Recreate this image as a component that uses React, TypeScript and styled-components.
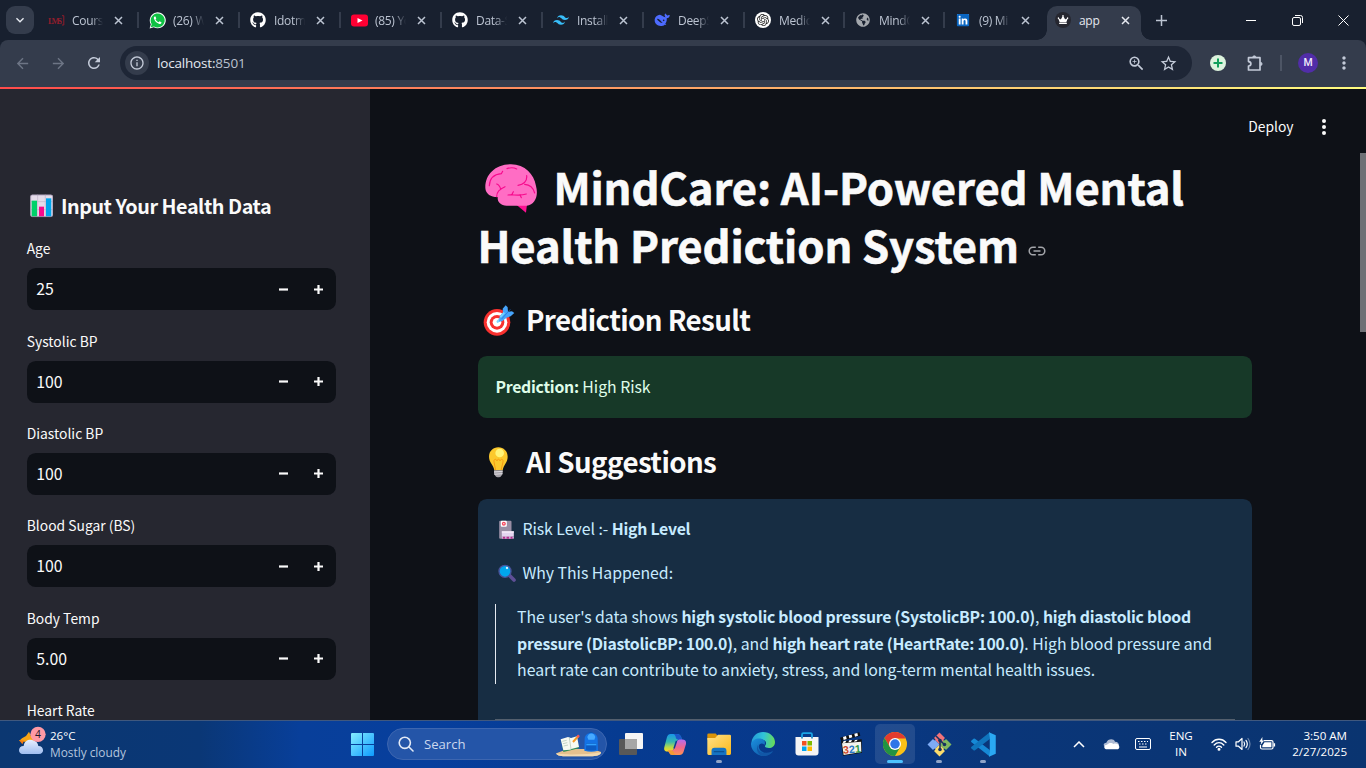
import React from 'react';
import styled, { createGlobalStyle, css } from 'styled-components';
import {
  MdArrowBack, MdArrowForward, MdRefresh, MdOutlineInfo, MdZoomIn, MdStarBorder,
  MdMoreVert, MdKeyboardArrowDown,
} from 'react-icons/md';
import { FaGithub, FaYoutube, FaGlobeAmericas, FaLinkedin, FaCrown } from 'react-icons/fa';
import { SiTailwindcss, SiOpenai } from 'react-icons/si';

const SOURCE = "'Noto Sans CJK JP', 'Noto Sans', sans-serif";
const SEGOE = "'Open Sans', 'Noto Sans', sans-serif";

const GlobalStyle = createGlobalStyle`
  *, *::before, *::after { box-sizing: border-box; }
  html, body { margin: 0; padding: 0; overflow: hidden; background: #0e1117; }
  svg { display: block; flex: none; }
`;

const Screen = styled.div`
  width: 1366px;
  height: 768px;
  display: flex;
  flex-direction: column;
  overflow: hidden;
  font-family: ${SOURCE};
  color: #fafafa;
`;

/* ---------- Browser tab strip ---------- */

const TabStrip = styled.div`
  height: 40px;
  flex: none;
  display: flex;
  background: #18202f;
  font-family: ${SEGOE};
`;

const TabSearch = styled.div`
  width: 28px;
  height: 28px;
  margin: 6px 4px 0 6px;
  border-radius: 9px;
  background: #343c4c;
  color: #e8ebf2;
  display: flex;
  align-items: center;
  justify-content: center;
`;

const Tab = styled.div<{ $w: number }>`
  width: ${p => p.$w}px;
  height: 40px;
  flex: none;
  display: flex;
  align-items: center;
  padding-left: 10px;
  position: relative;
  color: #bcc4d2;
`;

const TabDivider = styled.i`
  width: 2px;
  height: 16px;
  background: #343c4c;
  position: absolute;
  right: 0;
  top: 12px;
`;

const Favicon = styled.span`
  width: 16px;
  height: 16px;
  flex: none;
  display: flex;
  align-items: center;
  justify-content: center;
`;

const TabTitle = styled.span<{ $fade?: boolean }>`
  width: 32px;
  margin: 2px 0 0 8px;
  font-size: 12px;
  line-height: 18px;
  letter-spacing: -0.3px;
  white-space: nowrap;
  overflow: hidden;
  ${p => p.$fade && css`
    -webkit-mask-image: linear-gradient(90deg, #000 60%, transparent 97%);
    mask-image: linear-gradient(90deg, #000 60%, transparent 97%);
  `}
`;

const TabClose = styled.span`
  margin-left: 10px;
  display: flex;
`;

const ActiveTab = styled.div`
  width: 94px;
  height: 34px;
  margin: 6px 0 0 2px;
  flex: none;
  display: flex;
  align-items: center;
  padding: 0 0 6px 8px;
  border-radius: 10px 10px 0 0;
  background: #343c4c;
  color: #e6e9f0;
  position: relative;
  &::before, &::after {
    content: '';
    position: absolute;
    bottom: 0;
    width: 10px;
    height: 10px;
  }
  &::before {
    left: -10px;
    background: radial-gradient(circle at 0 0, transparent 9.5px, #343c4c 10px);
  }
  &::after {
    right: -10px;
    background: radial-gradient(circle at 100% 0, transparent 9.5px, #343c4c 10px);
  }
`;

const NewTab = styled.span`
  width: 40px;
  height: 40px;
  color: #bcc4d2;
  display: flex;
  align-items: center;
  justify-content: center;
`;

const WindowButtons = styled.div`
  margin-left: auto;
  display: flex;
`;

const WindowButton = styled.span`
  width: 46px;
  height: 40px;
  display: flex;
  align-items: center;
  justify-content: center;
`;

/* ---------- Browser toolbar ---------- */

const ToolbarBack = styled.div`
  flex: none;
  background: #18202f;
`;

const Toolbar = styled.div`
  height: 47px;
  display: flex;
  align-items: center;
  padding: 0 0 1px 4px;
  background: #343c4c;
  border-radius: 8px 8px 0 0;
  overflow: hidden;
  font-family: ${SEGOE};
  color: #c3cad8;
`;

const ToolButton = styled.span<{ $w?: number; $dim?: boolean }>`
  width: ${p => p.$w ?? 36}px;
  height: 36px;
  flex: none;
  display: flex;
  align-items: center;
  justify-content: center;
  color: ${p => (p.$dim ? '#6d7585' : 'inherit')};
`;

const Omnibox = styled.div`
  width: 1072px;
  height: 34px;
  margin-left: 8px;
  flex: none;
  border-radius: 17px;
  background: #1e2636;
  display: flex;
  align-items: center;
  padding: 0 8px 0 5px;
`;

const SiteInfo = styled.span`
  width: 24px;
  height: 24px;
  border-radius: 50%;
  background: #343c4c;
  display: flex;
  align-items: center;
  justify-content: center;
`;

const Address = styled.span`
  flex: 1;
  margin-left: 8px;
  font-size: 13.5px;
  line-height: 20px;
  letter-spacing: -0.18px;
  color: #e5e9f1;
  span { color: #bac1cf; }
`;

const ToolDivider = styled.i`
  width: 2px;
  height: 16px;
  flex: none;
  margin: 0 16px 0 14px;
  background: #4d5565;
`;

const Avatar = styled.span`
  width: 20px;
  height: 20px;
  flex: none;
  border-radius: 50%;
  background: #512da8;
  color: #f0ebfa;
  font-family: Roboto, sans-serif;
  font-size: 10.5px;
  font-weight: 500;
  line-height: 20px;
  text-align: center;
`;

const Decoration = styled.div`
  height: 2px;
  flex: none;
  background: linear-gradient(90deg, #ff4b4b, #fffd80);
`;

/* ---------- App page ---------- */

const Page = styled.div`
  height: 631px;
  flex: none;
  display: flex;
  overflow: hidden;
  background: #0e1117;
`;

const Sidebar = styled.aside`
  width: 370px;
  flex: none;
  padding: 103px 34px 0 26.7px;
  background: #262730;
`;

const SidebarTitle = styled.h2`
  margin: 0;
  height: 27.5px;
  padding-left: 3.3px;
  display: flex;
  align-items: flex-start;
  gap: 7.6px;
  font-size: 19.8px;
  line-height: 27px;
  font-weight: 600;
  letter-spacing: -0.46px;
  white-space: nowrap;
  svg { margin-top: 2.4px; }
`;

const Field = styled.div`
  height: 92.4px;
  padding-top: 16.8px;
`;

const FieldLabel = styled.label`
  display: block;
  height: 31.9px;
  font-size: 13.86px;
  line-height: 24px;
`;

const NumberInput = styled.div`
  height: 42px;
  border-radius: 8.8px;
  background: #0e1117;
  display: flex;
  align-items: center;
  padding-left: 9.6px;
`;

const NumberValue = styled.span`
  flex: 1;
  font-size: 15.84px;
  line-height: 24px;
`;

const Step = styled.span`
  width: 35.2px;
  display: flex;
  justify-content: center;
`;

const Main = styled.main`
  width: 996px;
  flex: none;
  display: flex;
  flex-direction: column;
`;

const AppHeader = styled.header`
  height: 64px;
  flex: none;
  display: flex;
  align-items: center;
  justify-content: flex-end;
  gap: 24.5px;
  padding: 11px 27px 0 0;
  font-size: 13.86px;
  line-height: 24px;
`;

const DeployLabel = styled.span`
  padding-bottom: 1px;
`;

const ScrollArea = styled.div`
  flex: 1;
  display: flex;
  justify-content: space-between;
  overflow: hidden;
`;

const Content = styled.div`
  width: 774px;
  margin-left: 108px;
  flex: none;
`;

const ScrollTrack = styled.div`
  width: 6px;
  display: flex;
`;

const ScrollThumb = styled.div`
  width: 6px;
  height: 179px;
  background: #6e7075;
`;

const Title = styled.h1`
  margin: 4px 0 0;
  font-size: 43.6px;
  font-weight: 700;
  line-height: 58px;
  -webkit-text-stroke: 0.6px #fafafa;
`;

const TitleLine = styled.span<{ $track: number; $pull?: number }>`
  height: 58px;
  margin-left: ${p => p.$pull ?? 0}px;
  display: flex;
  align-items: center;
  white-space: nowrap;
  letter-spacing: ${p => p.$track}px;
  svg.brain { margin: 4px 16.7px 0 6.7px; }
  svg.link { margin: 13px 0 0 9.5px; }
`;

const Heading = styled.h2<{ $mt: number; $mb: number }>`
  height: 40px;
  margin: ${p => p.$mt}px 0 ${p => p.$mb}px;
  display: flex;
  align-items: center;
  font-size: 27.7px;
  line-height: 40px;
  font-weight: 600;
  letter-spacing: -0.6px;
  white-space: nowrap;
`;

const HeadingIcon = styled.span<{ $inset: number }>`
  width: 48px;
  padding: 3px 0 0 ${p => p.$inset}px;
  flex: none;
`;

const Alert = styled.div<{ $tone: 'success' | 'info' }>`
  border-radius: 8.8px;
  font-size: 15.84px;
  line-height: 26.6px;
  letter-spacing: -0.03px;
  white-space: nowrap;
  b { font-weight: 600; letter-spacing: -0.26px; }
  ${p => p.$tone === 'success'
    ? css`height: 62px; padding: 18px 17.4px; background: #173928; color: #dffde9;`
    : css`height: 300px; padding: 17px 17.4px; background: #172d43; color: #c7ebff;`}
`;

const Line = styled.p`
  height: 26.6px;
  margin: 0 0 17.4px;
  display: flex;
  align-items: center;
  white-space: pre;
`;

const LineIcon = styled.span`
  width: 27px;
  padding-left: 2.6px;
  flex: none;
`;

const Quote = styled.blockquote`
  height: 80px;
  margin: 1px 0 35px;
  padding-left: 20.7px;
  border-left: 1px solid #e6eaf1;
`;

const QuoteLine = styled.div`
  height: 26.6px;
`;

const Rule = styled.hr`
  height: 1px;
  margin: 0;
  border: 0;
  background: #535f6d;
`;

/* ---------- Taskbar ---------- */

const Taskbar = styled.div`
  height: 48px;
  flex: none;
  display: flex;
  align-items: center;
  padding-bottom: 1px;
  border-top: 1px solid #40587e;
  background: linear-gradient(90deg, #0b3771 0, #0a3776 200px, #083f9a 300px, #073f9d 430px, #063b91 620px, #08398a 800px, #0a3679 1000px, #0a3470 1366px);
  font-family: ${SEGOE};
  color: #fff;
`;

const Weather = styled.div`
  width: 342px;
  padding-left: 19px;
  flex: none;
  display: flex;
  align-items: center;
  gap: 4px;
  svg { margin-bottom: 6px; }
`;

const TwoLines = styled.div<{ $align?: string; $w?: number; $lift?: boolean }>`
  width: ${p => (p.$w ? `${p.$w}px` : 'auto')};
  text-align: ${p => p.$align ?? 'left'};
  font-size: 11.6px;
  line-height: 16px;
  letter-spacing: -0.02px;
  white-space: nowrap;
  padding-bottom: ${p => (p.$lift ? 1 : 0)}px;
`;

const Muted = styled.div`
  color: #b4c5de;
  font-size: 11.9px;
`;

const TaskCell = styled.div<{ $active?: boolean; $run?: boolean }>`
  width: 40px;
  height: 40px;
  margin-right: 4px;
  flex: none;
  display: flex;
  align-items: center;
  justify-content: center;
  border-radius: 5px;
  position: relative;
  background: ${p => (p.$active ? 'rgba(255,255,255,.1)' : 'transparent')};
  ${p => (p.$active || p.$run) && css`
    &::after {
      content: '';
      position: absolute;
      bottom: 1px;
      left: 50%;
      transform: translateX(-50%);
      width: ${p.$active ? 16 : 6}px;
      height: 3px;
      border-radius: 2px;
      background: ${p.$active ? '#4cc2ff' : '#8fa4c8'};
    }
  `}
`;

const SearchBox = styled.div`
  width: 220px;
  height: 32px;
  margin: 0 4px 0 1px;
  flex: none;
  display: flex;
  align-items: center;
  padding: 0 4px 0 10px;
  border-radius: 16px;
  border: 1px solid #3d66b0;
  background: #2455a8;
`;

const SearchText = styled.span`
  flex: 1;
  margin-left: 10px;
  font-size: 13.1px;
  line-height: 18px;
  color: #cbd8ee;
`;

const Tray = styled.div`
  margin-left: auto;
  padding-right: 19px;
  display: flex;
  align-items: center;
`;

const TrayIcon = styled.span<{ $w: number }>`
  width: ${p => p.$w}px;
  display: flex;
  justify-content: center;
`;

/* ---------- Drawings ---------- */

const CloseX = () => (
  <svg width="9" height="9" viewBox="0 0 9 9"><path d="M1 1l7 7M8 1L1 8" stroke="currentColor" strokeWidth="1.5" /></svg>
);

const LmsMark = () => (
  <svg width="17" height="11" viewBox="0 0 17 11">
    <text x="0" y="8.8" fontFamily="Liberation Serif, serif" fontSize="8.5" fontWeight="700" fill="#8f1d2c" textLength="14">LMS</text>
    <path d="M14 .7h1.8v9.3H14" fill="none" stroke="#8f1d2c" />
  </svg>
);

const WhatsappMark = () => (
  <svg width="17" height="17" viewBox="0 0 17 17">
    <path d="M.6 16.5l1.2-4.2A8 8 0 1 1 4.8 15.3z" fill="#fff" />
    <path d="M1.8 15.3l.9-3.2A7 7 0 1 1 5 14.4z" fill="#0fc143" />
    <path d="M5.7 4.4c-.6.3-1.1 1.2-.8 2.2.7 2.5 2.9 4.7 5.4 5.4 1 .2 2-.4 2.2-1.3l-.1-.5-1.9-.9-.9 1c-1.4-.6-2.5-1.6-3.1-3l.8-.8-.8-2z" fill="#fff" />
  </svg>
);

const YoutubeMark = () => (
  <svg width="17" height="13" viewBox="0 0 17 13">
    <rect width="17" height="12" y=".5" rx="3" fill="#ff0033" />
    <path d="M6.5 4l5 2.5-5 2.5z" fill="#fff" />
  </svg>
);

const WhaleMark = () => (
  <svg width="17" height="14" viewBox="0 0 51 40">
    <path d="M18 4C7 5 2 13 2 21c0 10 8 17 18 17 5 0 9-1 12-4l5 1-3-4c4-5 5-10 4-16 5 0 9-4 10-10-3 1-5 0-7 2-3-2-6-4-7-7-4 5-2 9 1 12-6 0-10-6-17-8z" fill="#4d6bfe" />
    <path d="M9 16c7 0 11 6 17 13-5 0-9-2-12-6-3-3-4-3-5-7z" fill="#18202f" />
    <circle cx="29" cy="21" r="2.5" fill="#18202f" />
  </svg>
);

const RestoreIcon = () => (
  <svg width="11" height="11" viewBox="0 0 11 11" fill="none" stroke="#fff">
    <rect x=".5" y="2.5" width="8" height="8" rx="1.5" />
    <path d="M3 .5h5.5a2 2 0 0 1 2 2V8" />
  </svg>
);

const LeafPlus = () => (
  <svg width="16" height="16" viewBox="0 0 16 16">
    <circle cx="8" cy="8" r="8" fill="#dcf3dd" />
    <path d="M8 3.5v9M3.5 8h9" stroke="#12a05c" strokeWidth="2" />
  </svg>
);

const PuzzleIcon = () => (
  <svg width="17" height="17" viewBox="0 0 17 17" fill="none" stroke="currentColor" strokeWidth="1.7" strokeLinejoin="round">
    <path d="M1.5 2.7H13V15H1.5v-4c3.2-.2 3.2-4.2 0-4.4z" />
    <path d="M5.6 2.5a1.7 1.7 0 0 1 3.4 0zM13.5 7.3a1.6 1.6 0 0 1 0 3.2z" fill="currentColor" strokeWidth=".8" />
  </svg>
);

const ChartEmoji = () => (
  <svg width="23.3" height="23.3" viewBox="90 43 70 70">
    <rect x="91" y="45" width="68" height="66" rx="6" fill="#e5dcea" />
    <path d="M91 66h68M91 90h68M113 45v66M136 45v66" stroke="#bfb3c9" strokeWidth="2" />
    <path d="M95 63h16v48H95z" fill="#00d26a" />
    <path d="M117 81h15v30h-15z" fill="#f70a8d" />
    <path d="M138 56h16v55h-16z" fill="#00a6ed" />
    <rect x="92" y="46" width="66" height="65" rx="5" fill="none" stroke="#9b8faa" strokeWidth="2" />
  </svg>
);

const BrainEmoji = () => (
  <svg className="brain" width="52" height="49" viewBox="44 40 156 147">
    <path d="M139 163l28 23 3-25z" fill="#fc0f92" />
    <path d="M45 112C44 72 75 41 122 41c42 1 69 29 75 65 8 28-2 56-28 59h-60c-18-1-28-11-27-26-17 1-36-7-37-27z" fill="#ff6dc4" />
    <path d="M57 105c1-22 14-34 36-36l4-7M110 54q16-6 29 1M79 138c0-15 8-22 25-30M79 100q8 2 12 15M143 104c16-3 28-12 26-29M163 101c17 1 26 11 30 26M113 133c14-2 37 4 55-3M125 131l4-8M149 132l4 9" fill="none" stroke="#f70a8d" strokeWidth="3.5" strokeLinecap="round" />
  </svg>
);

const LinkIcon = () => (
  <svg className="link" width="18" height="10" viewBox="0 0 18 10" fill="none" stroke="#a3a5aa" strokeWidth="1.5">
    <path d="M7.8 1.2H5a3.8 3.8 0 0 0 0 7.6h2.8M10.2 1.2H13a3.8 3.8 0 0 1 0 7.6h-2.8M5.5 5h7" />
  </svg>
);

const TargetEmoji = () => (
  <svg width="32" height="31.3" viewBox="38 464 96 94">
    <circle cx="80" cy="516" r="40" fill="#f8312f" />
    <circle cx="80" cy="516" r="31" fill="#fff" />
    <circle cx="80" cy="516" r="22" fill="#f8312f" />
    <circle cx="80" cy="516" r="13" fill="#fff" />
    <path d="M82 514l25-26" stroke="#7fd6ff" strokeWidth="7" strokeLinecap="round" />
    <path d="M88 498l10-12-1-11 9-10 6 6 1 13 12-1 7 5-11 10-12 4-14 11-9 1z" fill="#46a4fb" />
    <path d="M94 506l26-29" stroke="#1f6fd6" strokeWidth="2" />
    <path d="M90 501l12-14" stroke="#74d7ff" strokeWidth="5" />
  </svg>
);

const BulbEmoji = () => (
  <svg width="20.7" height="31.3" viewBox="54 50 62 94">
    <path d="M85 51c16 0 28 12 28 28 0 18-13 25-15 41H73C71 104 57 97 57 79c0-16 12-28 28-28z" fill="#fcc92d" />
    <path d="M77 120l-5-25c-2-9 7-11 9-3 1-7 8-7 9 0 2-8 11-6 9 3l-6 25" fill="none" stroke="#f59b14" strokeWidth="3" />
    <circle cx="89" cy="68" r="13" fill="#fff478" />
    <path d="M72 120h26v11l-5 7c-2 4-14 4-16 0l-5-7z" fill="#a7a4ab" />
    <path d="M72 125l26-2M73 132l24-2" stroke="#e8e6ea" strokeWidth="2.5" />
  </svg>
);

const HospitalEmoji = () => (
  <svg width="17" height="19" viewBox="88 268 50 57">
    <rect x="91" y="270" width="37" height="54" rx="3" fill="#998ea4" />
    <rect x="96" y="270" width="18" height="18" rx="3" fill="#fff" />
    <circle cx="105" cy="279" r="6" fill="#f8485e" /><circle cx="105" cy="279" r="2" fill="#fff" />
    <path d="M99 302h36v16H99z" fill="#e4d5f0" />
    <path d="M99 302h36v4H99z" fill="#f7eefa" />
    <path d="M99 318h36v6H99z" fill="#dfb8e5" />
    <path d="M102 318h7v6h-7zM113 318h8v6h-8zM125 318h6v6h-6z" fill="#b4318f" />
  </svg>
);

const MagnifierEmoji = () => (
  <svg width="18" height="18" viewBox="85 401 54 54">
    <path d="M118 434l15 15" stroke="#5e4f96" strokeWidth="11" strokeLinecap="round" />
    <circle cx="106" cy="423" r="18" fill="#00a6ed" stroke="#48529a" strokeWidth="4" />
    <circle cx="112" cy="413" r="3.5" fill="#d8f4ff" />
  </svg>
);

const WeatherIcon = () => (
  <svg width="27" height="30" viewBox="57 77 81 90">
    <path d="M78 107l9-13 6 14 10 2v14H73l-16-2 9-8z" fill="#f8a414" />
    <path d="M57 119l15 2-5 11z" fill="#f47a13" />
    <defs><linearGradient id="wc" x1="0" y1="0" x2="0" y2="1"><stop offset="0" stopColor="#e7efff" /><stop offset="1" stopColor="#9fbdf0" /></linearGradient></defs>
    <path d="M68 161c-15 0-15-24 3-24 2-15 14-20 25-18 12 2 18 9 19 18 18 0 19 24 2 24z" fill="url(#wc)" />
    <circle cx="114" cy="102" r="23" fill="#ff99a4" />
    <text x="114" y="112" textAnchor="middle" fontFamily="Open Sans, sans-serif" fontSize="31" fill="#1b1b2b">4</text>
  </svg>
);

const StartIcon = () => (
  <svg width="23" height="23" viewBox="0 0 23 23">
    <defs><linearGradient id="win" x1="0" y1="0" x2="1" y2="1"><stop offset="0" stopColor="#86edff" /><stop offset="1" stopColor="#0d9bff" /></linearGradient></defs>
    <path d="M1 0h10v11H0V1q0-1 1-1zM12 0h10q1 0 1 1v10H12zM0 12h11v11H1q-1 0-1-1zM12 12h11v10q0 1-1 1H12z" fill="url(#win)" />
  </svg>
);

const SearchGlyph = () => (
  <svg width="16" height="16" viewBox="0 0 16 16" fill="none" stroke="#e3eaf6" strokeWidth="1.6">
    <circle cx="6.8" cy="6.8" r="5.6" /><path d="M11 11l4 4" strokeLinecap="round" />
  </svg>
);

const SchoolArt = () => (
  <svg width="46" height="26" viewBox="647 50 138 78">
    <path d="M648 117l34-13h76l24 9c0 9-14 13-32 13h-76c-16 0-26-3-26-9z" fill="#e5c08e" />
    <path d="M648 117c20 5 90 5 134-3 0 9-14 12-32 12h-76c-16 0-26-3-26-9z" fill="#f3dab0" />
    <path d="M663 78l45-10 8 34-47 11z" fill="#2f8d55" />
    <path d="M661 75l22-7 9 3 18-5 6 32-20 5-7 3-20 2z" fill="#f7faf2" />
    <path d="M687 70l5 34M666 81l13-3M668 88l13-3M670 95l13-3" stroke="#a9bfae" strokeWidth="2" />
    <path d="M698 83l16-18" stroke="#f69a26" strokeWidth="6" /><path d="M711 69l5-6" stroke="#f4585a" strokeWidth="7" />
    <path d="M743 62q9-16 18 0" fill="none" stroke="#0958b8" strokeWidth="4" />
    <path d="M733 74c0-24 39-24 39 0l1 35q-20 6-41 0z" fill="#1473e6" />
    <path d="M741 68c4-14 20-14 24 0l-3 8h-18z" fill="#46a9ff" />
    <path d="M738 86h30v20q-15 5-31 0z" fill="#0c5cc4" /><path d="M738 88h30v5h-30z" fill="#2fa0ff" />
  </svg>
);

const TaskViewIcon = () => (
  <svg width="24" height="22" viewBox="0 0 24 22">
    <rect x="6" y="0" width="18" height="16" rx="1" fill="#f5f5f5" />
    <rect x="0" y="6" width="18" height="16" rx="1" fill="#585858" />
    <path d="M6 6h12v10H6z" fill="#a6a6a6" />
  </svg>
);

const CopilotIcon = () => (
  <svg width="22" height="21" viewBox="0 0 44 42">
    <defs>
      <linearGradient id="cpa" x1="0" y1="0" x2="0" y2="1"><stop offset="0" stopColor="#1895e8" /><stop offset=".45" stopColor="#35b8b0" /><stop offset=".75" stopColor="#b6d94c" /><stop offset="1" stopColor="#ffd51e" /></linearGradient>
      <linearGradient id="cpb" x1="0" y1="0" x2="0" y2="1"><stop offset="0" stopColor="#b36cf0" /><stop offset=".5" stopColor="#ee6690" /><stop offset="1" stopColor="#ff9350" /></linearGradient>
    </defs>
    <path d="M13 0h14q5 0 7 5l2 7h-7q-4 0-5 4l-5 15q-2 4-6 4H7q-9 0-6-10L6 6q2-6 7-6z" fill="url(#cpa)" />
    <path d="M26 0q6 0 8 5l2 7h-7l-5-3q-1-8-5-9z" fill="#1b56c9" />
    <path d="M31 42H17q-5 0-7-5l-2-4h7q4 0 5-4l5-13q2-5 6-5h6q8 0 7 9l-5 16q-2 6-8 6z" fill="url(#cpb)" />
    <path d="M18 42q-6 0-8-5l-2-4h7l4 2q1 6 5 7z" fill="#f29b34" />
    <path d="M20 29l5-15" stroke="#0a3d96" strokeWidth="3" />
  </svg>
);

const ExplorerIcon = () => (
  <svg width="24" height="23" viewBox="50 54 74 68">
    <path d="M51 58q0-4 4-4h22l6 8v12H51z" fill="#d99208" />
    <defs><linearGradient id="fol" x1="0" y1="0" x2="1" y2="1"><stop offset="0" stopColor="#ffe188" /><stop offset="1" stopColor="#fbb81a" /></linearGradient></defs>
    <path d="M51 68h24l9-10h36q4 0 4 4v54q0 4-4 4H55q-4 0-4-4z" fill="url(#fol)" />
    <path d="M64 120v-13q0-9 9-9h28q9 0 9 9v13z" fill="#1574c4" />
    <path d="M71 108h32v4H71z" fill="#0b5294" />
  </svg>
);

const EdgeIcon = () => (
  <svg width="24" height="24" viewBox="0 0 48 48">
    <defs>
      <linearGradient id="ea" x1="0" y1=".3" x2="1" y2=".4"><stop offset="0" stopColor="#249bd8" /><stop offset=".5" stopColor="#30c3d8" /><stop offset="1" stopColor="#67dc59" /></linearGradient>
      <linearGradient id="eb" x1="0" y1="0" x2="1" y2="1"><stop offset="0" stopColor="#1b90df" /><stop offset="1" stopColor="#0c4f9c" /></linearGradient>
    </defs>
    <path d="M1 20C3 8 12 0 24 0c14 0 24 10 24 20 0 8-6 12-12 12-5 0-9-2-8-4 5-6 1-13-7-13C13 15 4 20 1 26z" fill="url(#ea)" />
    <path d="M0 24c3-9 13-13 22-10 6 2 7 7 5 12-4-6-14-2-11 6 3 9 14 12 25 8l3-1C37 49 22 51 12 44 4 39 0 32 0 24z" fill="url(#eb)" />
    <path d="M15 24c-5 10 4 20 16 18 5 0 10-2 13-5-4 8-12 11-20 11-10-2-16-14-9-24z" fill="#1257a7" />
  </svg>
);

const StoreIcon = () => (
  <svg width="24" height="24" viewBox="0 0 48 48">
    <path d="M14 12V5q0-3 3-3h14q3 0 3 3v7" fill="none" stroke="#1aa5e6" strokeWidth="3.5" />
    <path d="M1 10h46v31q0 6-6 6H7q-6 0-6-6z" fill="#f4f4f5" />
    <path d="M14 18h9v9h-9z" fill="#f25022" /><path d="M25 18h9v9h-9z" fill="#7fba00" />
    <path d="M14 29h9v9h-9z" fill="#00a4ef" /><path d="M25 29h9v9h-9z" fill="#ffb900" />
    <path d="M14 10v3M34 10v3" stroke="#0d78b8" strokeWidth="3" />
  </svg>
);

const ClapperIcon = () => (
  <svg width="22" height="24" viewBox="449 52 66 72">
    <path d="M449 69l58-16 3 10-57 16z" fill="#111" />
    <path d="M458 67l9-3 2 9-9 3zM475 62l9-2 2 8-9 3zM492 57l9-2 2 8-9 3z" fill="#fff" />
    <path d="M452 80l62-6 1 40-57 9z" fill="#111" />
    <path d="M455 86l57-5 1 31-53 9z" fill="#f3f3ee" />
    <path d="M460 79l8-1-3 6-8 1zM477 77l8-1-3 6-8 1zM494 76l8-1-3 5-8 1z" fill="#fff" />
    <text x="458" y="115" fontFamily="Liberation Sans, sans-serif" fontWeight="700" fontSize="32" transform="rotate(-5 484 105)">
      <tspan fill="#d0462a">3</tspan><tspan fill="#2a77c8">2</tspan><tspan fill="#2f9a46">1</tspan>
    </text>
  </svg>
);

const ChromeIcon = () => (
  <svg width="24" height="24" viewBox="0 0 48 48">
    <circle cx="24" cy="24" r="24" fill="#fbc116" />
    <path d="M3.2 12A24 24 0 0 1 44.8 12V13H24L13.6 30z" fill="#e33b2e" />
    <path d="M3.2 12L13.6 30 24 35 34.4 30 24 48A24 24 0 0 1 3.2 12z" fill="#229342" />
    <circle cx="24" cy="24" r="12" fill="#fff" /><circle cx="24" cy="24" r="9.5" fill="#2f76e8" />
  </svg>
);

const GitIcon = () => (
  <svg width="25" height="25" viewBox="0 0 50 50">
    <path d="M25 1L37 13 25 25 13 13z" fill="#f1737a" /><path d="M37 13L49 25 37 37 25 25z" fill="#80b860" />
    <path d="M13 13L25 25 13 37 1 25z" fill="#7eabf5" /><path d="M25 25L37 37 25 49 13 37z" fill="#fbdc6c" />
    <path d="M18 8l8 8v20M26 17l9 8" stroke="#17305f" strokeWidth="3" fill="none" />
    <path d="M11 11l5 5M34 16l5-5M11 39l5-5M34 34l5 5" stroke="#0a3679" strokeWidth="3" />
    <circle cx="26" cy="17" r="3.6" fill="#17305f" /><circle cx="35" cy="25" r="3.6" fill="#17305f" /><circle cx="26" cy="35" r="3.6" fill="#17305f" />
  </svg>
);

const CodeIcon = () => (
  <svg width="25" height="25" viewBox="0 0 100 100">
    <path d="M2 34l8-7q3-2 6 0L75 72v26L2 41q-4-4 0-7z" fill="#1689d6" />
    <path d="M2 66l8 7q3 2 6 0L75 28V1L2 59q-4 4 0 7z" fill="#0f74bd" />
    <path d="M72 1L99 13V87L72 99 75 72V28z" fill="#2aa9f3" />
  </svg>
);

const CaretUp = () => (
  <svg width="12" height="7" viewBox="0 0 12 7"><path d="M1 6l5-5 5 5" fill="none" stroke="#fff" strokeWidth="1.5" /></svg>
);

const CloudIcon = () => (
  <svg width="17" height="11" viewBox="0 0 51 33">
    <path d="M10 24C0 24-1 11 10 11 14-1 32-3 36 8c9 0 12 6 12 12z" fill="#aebbd3" />
    <path d="M13 31c-12 0-12-13-1-14 6-7 15-6 19-2 9-4 18 2 18 9 0 5-3 7-7 7z" fill="#fff" />
  </svg>
);

const KeyboardIcon = () => (
  <svg width="16" height="12" viewBox="0 0 16 12" fill="none" stroke="#fff">
    <rect x=".5" y=".5" width="15" height="11" rx="1.5" />
    <path d="M3 3.5h1.5M6 3.5h1.5M9 3.5h1.5M12 3.5h1M4 6h1.5M7 6h1.5M10 6h1.5M4 9h8" strokeWidth="1.2" />
  </svg>
);

const WifiGlyph = () => (
  <svg width="16" height="13" viewBox="0 0 16 13" fill="none" stroke="#fff" strokeWidth="1.4" strokeLinecap="round">
    <path d="M1 4.5C5 .2 11 .2 15 4.5M3.2 7c3-3 6.6-3 9.6 0M5.5 9.2c1.5-1.5 3.5-1.5 5 0" /><circle cx="8" cy="11.3" r=".8" fill="#fff" />
  </svg>
);

const VolumeGlyph = () => (
  <svg width="16" height="14" viewBox="0 0 16 14" fill="none" stroke="#fff" strokeWidth="1.2" strokeLinecap="round" strokeLinejoin="round">
    <path d="M1 4.8h2.5L7 1.5v11L3.5 9.2H1zM9 5q1.3 2 0 4M11 3.3q2.6 3.7 0 7.4" /><path d="M13 1.5q4 5.5 0 11" opacity=".4" />
  </svg>
);

const BatteryGlyph = () => (
  <svg width="17" height="14" viewBox="0 0 17 14">
    <path d="M5 3.6h7.5q1.5 0 1.5 1.5v5.4q0 1.5-1.5 1.5H3q-1.5 0-1.5-1.5V8" fill="none" stroke="#fff" strokeWidth="1.2" />
    <path d="M5.5 5.3h6.9v5H3.3V8.7zM14.6 6.2h1.5v3.2h-1.5zM3.4 0L.3 4.7h2L1.5 8l3.7-4.6H3.3z" fill="#fff" />
  </svg>
);

/* ---------- Data ---------- */

const tabs: { title: string; icon: React.ReactNode; w: number }[] = [
  { title: 'Cours', icon: <LmsMark />, w: 101 },
  { title: '(26) W', icon: <WhatsappMark />, w: 101 },
  { title: 'Idotm', icon: <FaGithub size={16} color="#fff" />, w: 101 },
  { title: '(85) Yo', icon: <YoutubeMark />, w: 101 },
  { title: 'Data-S', icon: <FaGithub size={16} color="#fff" />, w: 101 },
  { title: 'Install', icon: <SiTailwindcss size={16} color="#38bdf8" />, w: 101 },
  { title: 'DeepS', icon: <WhaleMark />, w: 101 },
  { title: 'Medic', icon: <svg width="16" height="16" viewBox="0 0 16 16"><circle cx="8" cy="8" r="8" fill="#fff" /><SiOpenai x={2} y={2} size={12} color="#222" /></svg>, w: 100 },
  { title: 'MindC', icon: <FaGlobeAmericas size={14} color="#a3a7ad" />, w: 100 },
  { title: '(9) Mi', icon: <svg width="14" height="14" viewBox="0 0 14 14"><path d="M1 1h12v12H1z" fill="#fff" /><FaLinkedin size={14} color="#0a66c2" /></svg>, w: 100 },
];

const fields = [
  ['Age', '25'],
  ['Systolic BP', '100'],
  ['Diastolic BP', '100'],
  ['Blood Sugar (BS)', '100'],
  ['Body Temp', '5.00'],
  ['Heart Rate', '100'],
];

export default function App() {
  return (
    <Screen>
      <GlobalStyle />
      <TabStrip>
        <TabSearch><MdKeyboardArrowDown size={16} /></TabSearch>
        {tabs.map((t, i) => (
          <Tab key={i} $w={t.w}>
            <Favicon>{t.icon}</Favicon>
            <TabTitle $fade>{t.title}</TabTitle>
            <TabClose><CloseX /></TabClose>
            {i < 9 && <TabDivider />}
          </Tab>
        ))}
        <ActiveTab>
          <Favicon>
            <svg width="16" height="16" viewBox="0 0 16 16"><circle cx="8" cy="8" r="8" fill="#262730" /><FaCrown x={2.5} y={2} size={11} color="#fff" /></svg>
          </Favicon>
          <TabTitle>app</TabTitle>
          <TabClose><CloseX /></TabClose>
        </ActiveTab>
        <NewTab><svg width="11" height="11" viewBox="0 0 11 11"><path d="M5.5 0v11M0 5.5h11" stroke="currentColor" strokeWidth="1.5" /></svg></NewTab>
        <WindowButtons>
          <WindowButton><svg width="10" height="1"><rect width="10" height="1" fill="#fff" /></svg></WindowButton>
          <WindowButton><RestoreIcon /></WindowButton>
          <WindowButton><svg width="11" height="11" viewBox="0 0 11 11"><path d="M.5.5l10 10M10.5.5l-10 10" stroke="#fff" /></svg></WindowButton>
        </WindowButtons>
      </TabStrip>

      <ToolbarBack>
        <Toolbar>
          <ToolButton $dim><MdArrowBack size={17} /></ToolButton>
          <ToolButton $dim><MdArrowForward size={17} /></ToolButton>
          <ToolButton><MdRefresh size={18} /></ToolButton>
          <Omnibox>
            <SiteInfo><MdOutlineInfo size={16} /></SiteInfo>
            <Address>localhost:<span>8501</span></Address>
            <ToolButton $w={32}><MdZoomIn size={19} /></ToolButton>
            <ToolButton $w={32}><MdStarBorder size={19} /></ToolButton>
          </Omnibox>
          <ToolButton $w={52}><LeafPlus /></ToolButton>
          <ToolButton $w={22}><PuzzleIcon /></ToolButton>
          <ToolDivider />
          <Avatar>M</Avatar>
          <ToolButton $w={52}><MdMoreVert size={20} /></ToolButton>
        </Toolbar>
      </ToolbarBack>
      <Decoration />

      <Page>
        <Sidebar>
          <SidebarTitle><ChartEmoji />Input Your Health Data</SidebarTitle>
          {fields.map(([label, value]) => (
            <Field key={label}>
              <FieldLabel>{label}</FieldLabel>
              <NumberInput>
                <NumberValue>{value}</NumberValue>
                <Step><svg width="9" height="9" viewBox="0 0 9 9"><path d="M0 4.5h9" stroke="#fafafa" strokeWidth="2.2" /></svg></Step>
                <Step><svg width="9" height="9" viewBox="0 0 9 9"><path d="M0 4.5h9M4.5 0v9" stroke="#fafafa" strokeWidth="2.2" /></svg></Step>
              </NumberInput>
            </Field>
          ))}
        </Sidebar>
        <Main>
          <AppHeader>
            <DeployLabel>Deploy</DeployLabel>
            <svg width="21" height="16" viewBox="0 0 21 16" fill="#fafafa"><circle cx="6" cy="2" r="2" /><circle cx="6" cy="8" r="2" /><circle cx="6" cy="14" r="2" /></svg>
          </AppHeader>
          <ScrollArea>
            <Content>
              <Title>
                <TitleLine $track={-0.12}><BrainEmoji />MindCare: AI-Powered Mental</TitleLine>
                <TitleLine $track={-0.12} $pull={-0.6}>Health Prediction System<LinkIcon /></TitleLine>
              </Title>
              <Heading $mt={26} $mb={17}><HeadingIcon $inset={4.7}><TargetEmoji /></HeadingIcon>Prediction Result</Heading>
              <Alert $tone="success"><b>Prediction:</b> High Risk</Alert>
              <Heading $mt={23} $mb={18}><HeadingIcon $inset={10}><BulbEmoji /></HeadingIcon>AI Suggestions</Heading>
              <Alert $tone="info">
                <Line><LineIcon><HospitalEmoji /></LineIcon>Risk Level :- <b>High Level</b></Line>
                <Line><LineIcon><MagnifierEmoji /></LineIcon>Why This Happened:</Line>
                <Quote>
                  <QuoteLine>The user's data shows <b>high systolic blood pressure (SystolicBP: 100.0)</b>, <b>high diastolic blood</b></QuoteLine>
                  <QuoteLine><b>pressure (DiastolicBP: 100.0)</b>, and <b>high heart rate (HeartRate: 100.0)</b>. High blood pressure and</QuoteLine>
                  <QuoteLine>heart rate can contribute to anxiety, stress, and long-term mental health issues.</QuoteLine>
                </Quote>
                <Rule />
              </Alert>
            </Content>
            <ScrollTrack><ScrollThumb /></ScrollTrack>
          </ScrollArea>
        </Main>
      </Page>

      <Taskbar>
        <Weather>
          <WeatherIcon />
          <TwoLines $lift>26°C<Muted>Mostly cloudy</Muted></TwoLines>
        </Weather>
        <TaskCell><StartIcon /></TaskCell>
        <SearchBox><SearchGlyph /><SearchText>Search</SearchText><SchoolArt /></SearchBox>
        <TaskCell><TaskViewIcon /></TaskCell>
        <TaskCell><CopilotIcon /></TaskCell>
        <TaskCell $run><ExplorerIcon /></TaskCell>
        <TaskCell><EdgeIcon /></TaskCell>
        <TaskCell><StoreIcon /></TaskCell>
        <TaskCell><ClapperIcon /></TaskCell>
        <TaskCell $active><ChromeIcon /></TaskCell>
        <TaskCell $run><GitIcon /></TaskCell>
        <TaskCell $run><CodeIcon /></TaskCell>
        <Tray>
          <TrayIcon $w={32}><CaretUp /></TrayIcon>
          <TrayIcon $w={32}><CloudIcon /></TrayIcon>
          <TrayIcon $w={32}><KeyboardIcon /></TrayIcon>
          <TwoLines $align="center" $w={44}>ENG<br />IN</TwoLines>
          <TrayIcon $w={32}><WifiGlyph /></TrayIcon>
          <TrayIcon $w={16}><VolumeGlyph /></TrayIcon>
          <TrayIcon $w={32}><BatteryGlyph /></TrayIcon>
          <TwoLines $align="right" $w={64} $lift>3:50 AM<br />2/27/2025</TwoLines>
        </Tray>
      </Taskbar>
    </Screen>
  );
}
